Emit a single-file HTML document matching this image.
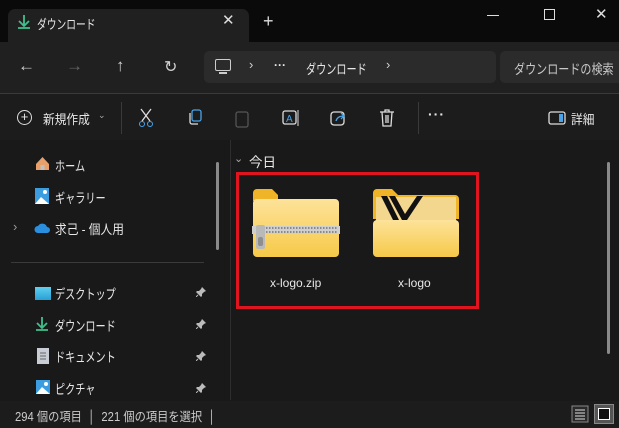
<!DOCTYPE html>
<html><head><meta charset="utf-8">
<style>
*{margin:0;padding:0;box-sizing:border-box}
body{width:619px;height:428px;overflow:hidden;background:#191919;font-family:"Liberation Sans","Noto Sans CJK JP",sans-serif;color:#e8e8e8;position:relative;font-size:12px}
.a{position:absolute;white-space:nowrap}
.ic{position:absolute;color:#d0d0d0;font-size:15px}
.k{transform:scaleX(.75);transform-origin:0 0}
.m{transform:scaleX(.9);transform-origin:0 0}
</style></head><body>
<div class="a" style="left:0;top:0;width:619px;height:42px;background:#0a0a0a"></div>
<div class="a" style="left:8px;top:9px;width:241px;height:33px;background:#202020;border-radius:7px 7px 0 0"></div>
<svg class="a" style="left:17px;top:14px" width="14" height="16"><path d="M7 1v10M2 7l5 5 5-5M1 14h12" stroke="#3fc18b" stroke-width="1.8" fill="none"/></svg>
<div class="a k" style="left:37px;top:14px;font-size:13px">ダウンロード</div>
<div class="a" style="left:222px;top:11px;font-size:15px;color:#ddd">✕</div>
<div class="a" style="left:263px;top:11px;font-size:18px;color:#ddd">+</div>
<div class="a" style="left:487px;top:15px;width:12px;height:1px;background:#ddd"></div>
<div class="a" style="left:544px;top:9px;width:11px;height:11px;border:1px solid #ddd"></div>
<div class="a" style="left:595px;top:5px;font-size:15px;color:#ddd">✕</div>
<div class="a" style="left:0;top:42px;width:619px;height:52px;background:#202020"></div>
<div class="ic" style="left:18px;top:56px;font-size:17px">←</div>
<div class="ic" style="left:66px;top:56px;font-size:17px;color:#666">→</div>
<div class="ic" style="left:116px;top:56px;font-size:17px">↑</div>
<div class="ic" style="left:164px;top:57px;font-size:16px">↻</div>
<div class="a" style="left:204px;top:51px;width:292px;height:32px;background:#2b2b2b;border-radius:5px"></div>
<div class="a" style="left:215px;top:59px;width:16px;height:12px;border:1.5px solid #ccc;border-radius:2px"></div>
<div class="a" style="left:219px;top:72px;width:8px;height:2px;background:#ccc"></div>
<div class="ic" style="left:249px;top:57px;font-size:13px">›</div>
<div class="a" style="left:274px;top:58px;font-size:12px;font-weight:bold">···</div>
<div class="a k" style="left:306px;top:58px;font-size:13.5px">ダウンロード</div>
<div class="ic" style="left:386px;top:57px;font-size:13px">›</div>
<div class="a" style="left:500px;top:51px;width:130px;height:32px;background:#2b2b2b;border-radius:5px"></div>
<div class="a k" style="left:514px;top:58px;font-size:13.5px;color:#c8c8c8;transform:scaleX(.82)">ダウンロードの検索</div>
<div class="a" style="left:0;top:93px;width:619px;height:1px;background:#3a3a3a"></div>
<div class="a" style="left:0;top:94px;width:619px;height:46px;background:#1c1c1c"></div>
<div class="a" style="left:17px;top:110px;width:15px;height:15px;border:1.3px solid #ddd;border-radius:50%;font-size:13px;line-height:12px;text-align:center">+</div>
<div class="a m" style="left:43px;top:109px;font-size:13px">新規作成</div>
<div class="a" style="left:98px;top:110px;font-size:9px;color:#aaa">⌄</div>
<div class="a" style="left:121px;top:102px;width:1px;height:32px;background:#3a3a3a"></div>
<svg class="a" style="left:138px;top:108px" width="16" height="20"><path d="M3 1l9 12M13 1L4 13" stroke="#ddd" stroke-width="1.3" fill="none"/><circle cx="4" cy="16" r="2.5" stroke="#4aa3e8" fill="none"/><circle cx="12" cy="16" r="2.5" stroke="#4aa3e8" fill="none"/></svg>
<svg class="a" style="left:187px;top:109px" width="16" height="18"><rect x="5" y="1" width="9" height="11" rx="2" stroke="#4aa3e8" fill="none" stroke-width="1.3"/><path d="M3 4v9a2 2 0 0 0 2 2h6" stroke="#ddd" fill="none" stroke-width="1.3"/></svg>
<svg class="a" style="left:235px;top:109px" width="14" height="19"><rect x="1" y="3" width="12" height="15" rx="2" stroke="#555" fill="none" stroke-width="1.3"/></svg>
<svg class="a" style="left:282px;top:109px" width="18" height="18"><rect x="1" y="2" width="13" height="13" rx="2" stroke="#ddd" fill="none" stroke-width="1.3"/><text x="4" y="13" font-size="10" fill="#4aa3e8" font-family="Liberation Sans">A</text><path d="M16 1v16" stroke="#ddd"/></svg>
<svg class="a" style="left:330px;top:109px" width="18" height="18"><rect x="1" y="3" width="13" height="13" rx="3" stroke="#ddd" fill="none" stroke-width="1.3"/><path d="M6 12c1-4 4-5 8-5M11 4l3 3-3 3" stroke="#4aa3e8" fill="none" stroke-width="1.3"/></svg>
<svg class="a" style="left:379px;top:109px" width="16" height="18"><path d="M1 3h14M6 3V1h4v2M3 3l1 14h8l1-14M7 6v8M9 6v8" stroke="#ddd" fill="none" stroke-width="1.3"/></svg>
<div class="a" style="left:418px;top:102px;width:1px;height:32px;background:#3a3a3a"></div>
<div class="a" style="left:428px;top:106px;font-size:14px;font-weight:bold;letter-spacing:1px">···</div>
<svg class="a" style="left:548px;top:111px" width="18" height="14"><rect x="1" y="1" width="16" height="12" rx="2" stroke="#ddd" fill="none" stroke-width="1.3"/><rect x="11" y="3" width="4" height="8" fill="#4aa3e8"/></svg>
<div class="a m" style="left:571px;top:109px;font-size:13px">詳細</div>
<div class="a" style="left:230px;top:140px;width:1px;height:260px;background:#2e2e2e"></div>
<div class="a" style="left:216px;top:162px;width:3px;height:88px;background:#8a8a8a;border-radius:2px"></div>
<svg class="a" style="left:35px;top:156px" width="15" height="15"><path d="M1 8L7.5 1 14 8v6H1z" fill="#e8a06a"/><rect x="5.5" y="9" width="4" height="5" fill="#c0c0c0"/></svg>
<div class="a k" style="left:55px;top:155px;font-size:13.5px">ホーム</div>
<svg class="a" style="left:35px;top:188px" width="14" height="16"><rect x="0" y="0" width="14" height="16" fill="#3b9de0"/><path d="M0 16l6-7 8 7z" fill="#fff"/><circle cx="10" cy="4" r="2" fill="#fff"/></svg>
<div class="a k" style="left:55px;top:187px;font-size:13.5px">ギャラリー</div>
<div class="a" style="left:13px;top:219px;font-size:13px;color:#999">›</div>
<svg class="a" style="left:34px;top:222px" width="17" height="12"><path d="M4 11a3.5 3.5 0 0 1 0-7 5 5 0 0 1 9 1 3 3 0 0 1 0 6z" fill="#2b8fe0"/></svg>
<div class="a m" style="left:55px;top:219px;font-size:13px">求己 - 個人用</div>
<div class="a" style="left:11px;top:262px;width:193px;height:1px;background:#3a3a3a"></div>
<div class="a" style="left:35px;top:287px;width:16px;height:13px;background:linear-gradient(#5fd0ee,#2a9fd6)"></div>
<div class="a k" style="left:55px;top:283px;font-size:13.5px">デスクトップ</div>
<svg class="a" style="left:35px;top:316px" width="14" height="16"><path d="M7 1v10M2 7l5 5 5-5M1 14h12" stroke="#3fc18b" stroke-width="1.8" fill="none"/></svg>
<div class="a k" style="left:55px;top:315px;font-size:13.5px">ダウンロード</div>
<svg class="a" style="left:37px;top:348px" width="12" height="16"><rect width="12" height="16" fill="#c8ccd4"/><path d="M3 5h6M3 8h6M3 11h6" stroke="#666"/></svg>
<div class="a k" style="left:55px;top:346px;font-size:13.5px">ドキュメント</div>
<svg class="a" style="left:36px;top:380px" width="14" height="14"><rect width="14" height="14" fill="#3b9de0"/><path d="M0 14l6-7 8 7z" fill="#fff"/><circle cx="10" cy="4" r="2" fill="#fff"/></svg>
<div class="a k" style="left:55px;top:378px;font-size:13.5px">ピクチャ</div>
<svg class="a" style="left:196px;top:287px" width="10" height="10"><path d="M6 0l4 4-2 1-2 2 0 2-1 1-5-5 1-1h2l2-2z" fill="#bbb"/><path d="M2 8l-2 2" stroke="#bbb"/></svg>
<svg class="a" style="left:196px;top:319px" width="10" height="10"><path d="M6 0l4 4-2 1-2 2 0 2-1 1-5-5 1-1h2l2-2z" fill="#bbb"/><path d="M2 8l-2 2" stroke="#bbb"/></svg>
<svg class="a" style="left:196px;top:351px" width="10" height="10"><path d="M6 0l4 4-2 1-2 2 0 2-1 1-5-5 1-1h2l2-2z" fill="#bbb"/><path d="M2 8l-2 2" stroke="#bbb"/></svg>
<svg class="a" style="left:196px;top:383px" width="10" height="10"><path d="M6 0l4 4-2 1-2 2 0 2-1 1-5-5 1-1h2l2-2z" fill="#bbb"/><path d="M2 8l-2 2" stroke="#bbb"/></svg>
<div class="a" style="left:234px;top:152px;font-size:11px;color:#aaa">⌄</div>
<div class="a" style="left:249px;top:151px;font-size:13.5px">今日</div>
<div class="a" style="left:607px;top:162px;width:3px;height:192px;background:#8a8a8a;border-radius:2px"></div>
<div class="a" style="left:236px;top:172px;width:243px;height:137px;border:3px solid #e0141e"></div>
<svg class="a" style="left:252px;top:188px" width="88" height="72">
<defs><linearGradient id="g1" x1="0" y1="0" x2="0" y2="1"><stop offset="0" stop-color="#fde39a"/><stop offset="1" stop-color="#f7c948"/></linearGradient></defs>
<path d="M1 5a4 4 0 0 1 4-4h15l6 6v6H1z" fill="#f0b428"/>
<rect x="1" y="11" width="86" height="58" rx="4" fill="url(#g1)"/>
<rect x="0" y="38" width="88" height="8" fill="#cfcfcf"/>
<path d="M14 40h72M14 44h72" stroke="#888" stroke-dasharray="1.5 1.5" stroke-width="2"/>
<rect x="4" y="37" width="9" height="24" rx="2" fill="#b9b9b9"/>
<rect x="6" y="49" width="5" height="9" rx="2" fill="#8e8e8e"/>
</svg>
<svg class="a" style="left:372px;top:188px" width="88" height="72">
<defs><linearGradient id="g2" x1="0" y1="0" x2="0" y2="1"><stop offset="0" stop-color="#fde39a"/><stop offset="1" stop-color="#f7c948"/></linearGradient></defs>
<path d="M1 5a4 4 0 0 1 4-4h15l6 6h57a4 4 0 0 1 4 4v20H1z" fill="#f0b428"/>
<rect x="4" y="9" width="80" height="26" fill="#f3d78f"/>
<path d="M9 8h6l12 24h-6z" fill="#111"/>
<path d="M17 8h6l10 18 12-18h6l-16 24h-5z" fill="#111"/>
<rect x="1" y="32" width="86" height="37" rx="4" fill="url(#g2)"/>
</svg>
<div class="a" style="left:270px;top:276px;font-size:12px">x-logo.zip</div>
<div class="a" style="left:398px;top:276px;font-size:12px">x-logo</div>
<div class="a" style="left:0;top:401px;width:619px;height:27px;background:#1c1c1c"></div>
<div class="a m" style="left:15px;top:406px;font-size:12.5px;color:#ccc">294 個の項目 &nbsp;│&nbsp; 221 個の項目を選択 &nbsp;│</div>
<svg class="a" style="left:571px;top:405px" width="18" height="18"><rect x="1" y="1" width="16" height="16" fill="#2a2a2a" stroke="#888"/><path d="M4 5h10M4 8h10M4 11h10M4 14h10" stroke="#ddd"/></svg>
<div class="a" style="left:594px;top:404px;width:20px;height:20px;background:#555;border:1px solid #888"></div>
<div class="a" style="left:598px;top:408px;width:12px;height:12px;border:1.5px solid #fff;background:#111"></div>
</body></html>
